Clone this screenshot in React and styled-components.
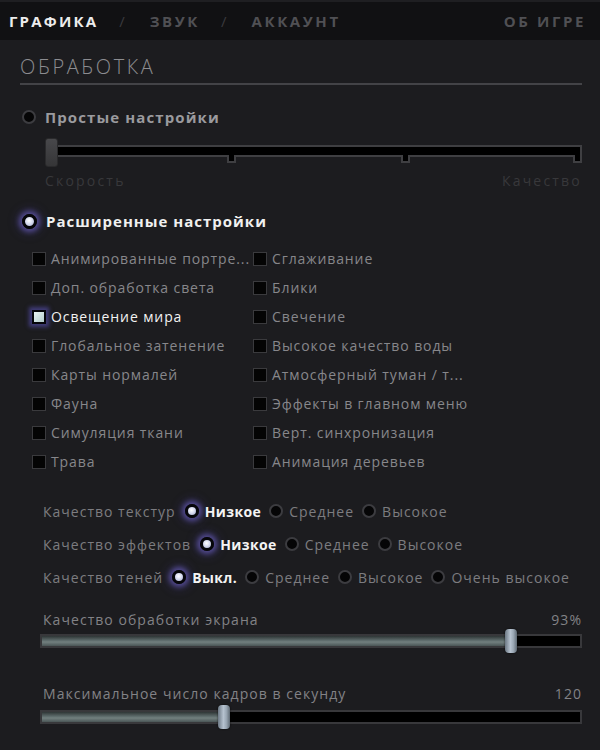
import React from "react";
import styled, { createGlobalStyle } from "styled-components";

const GlobalStyle = createGlobalStyle`
  html, body {
    margin: 0;
    padding: 0;
    background: #1c1c1f;
  }
  body {
    font-family: "Open Sans", "Noto Sans", sans-serif;
  }
`;

const Page = styled.div`
  width: 600px;
  height: 750px;
  background: #1c1c1f;
  overflow: hidden;
  display: flex;
  flex-direction: column;
`;

const TopBar = styled.div`
  height: 40px;
  background: #111113;
  border-top: 2px solid #1f1f22;
  box-sizing: border-box;
  display: flex;
  align-items: center;
  padding: 0 14px 0 9px;
`;

const Tab = styled.span`
  font-size: 15px;
  font-weight: 700;
  letter-spacing: ${(p) => (p.active ? 2.2 : 2.6)}px;
  color: ${(p) => (p.active ? "#ececec" : "#505054")};
`;

const Slash = styled.span`
  font-size: 15px;
  color: #3a3a3e;
  margin: 0 25px 0 21px;
`;

const Spacer = styled.div`
  flex: 1;
`;

const Content = styled.div`
  padding: 14px 18px 0 20px;
  display: flex;
  flex-direction: column;
`;

const SectionTitle = styled.div`
  font-size: 20px;
  font-weight: 300;
  letter-spacing: 2.6px;
  color: #8c8c90;
  line-height: 26px;
  padding-bottom: 3px;
  border-bottom: 2px solid #434347;
`;

const ModeRow = styled.div`
  display: flex;
  align-items: center;
  gap: 9px;
  margin-top: ${(p) => p.mt}px;
  margin-left: 2px;
`;

const ModeLabel = styled.span`
  font-size: 15px;
  font-weight: 700;
  letter-spacing: ${(p) => (p.active ? 1.0 : 1.1)}px;
  color: ${(p) => (p.active ? "#f0f0f0" : "#9a9a9e")};
`;

const Radio = styled.span`
  flex: none;
  width: ${(p) => p.size || 14}px;
  height: ${(p) => p.size || 14}px;
  border-radius: 50%;
  box-sizing: border-box;
  ${(p) =>
    p.checked
      ? `
    border: 3px solid #06060a;
    background: radial-gradient(circle at 45% 40%, #ffffff 0%, #d8dcf0 45%, #9ea6c8 100%);
    box-shadow: 0 0 5px 3px rgba(96, 86, 170, 0.75), 0 0 10px 5px rgba(70, 60, 140, 0.35);
  `
      : `
    border: 2px solid #3c3c40;
    background: #050506;
  `}
`;

const StepSlider = styled.div`
  margin: 11px 0 0 25px;
  position: relative;
  height: 30px;
`;

const StepTrack = styled.div`
  position: absolute;
  left: 12px;
  right: 0;
  top: 7px;
  height: 12px;
  background: #000;
  border: 2px solid #3f3f42;
  border-left: none;
  box-sizing: border-box;
`;

const Tick = styled.span`
  position: absolute;
  top: 8px;
  width: 9px;
  height: 8px;
  margin-left: -5px;
  background: #000;
  border: 2px solid #3f3f42;
  border-top: none;
  box-sizing: border-box;
`;

const StepThumb = styled.span`
  position: absolute;
  left: 0;
  top: 0;
  width: 13px;
  height: 29px;
  border-radius: 3px;
  background: linear-gradient(to bottom, #48484b, #353537);
  border: 1px solid #2a2a2c;
  box-sizing: border-box;
`;

const StepLabels = styled.div`
  display: flex;
  justify-content: space-between;
  margin: 5px 0 0 25px;
  font-size: 14px;
  letter-spacing: 2.2px;
  color: #38383b;
  line-height: 16px;
`;

const CheckGrid = styled.div`
  display: grid;
  grid-template-columns: 221px 1fr;
  grid-auto-rows: 29px;
  margin: 13px 0 0 12px;
`;

const CheckItem = styled.div`
  display: flex;
  align-items: center;
  gap: 5px;
  min-width: 0;
`;

const Box = styled.span`
  flex: none;
  width: 14px;
  height: 14px;
  box-sizing: border-box;
  border: 1px solid #3a3a3d;
  background: #040404;
  ${(p) =>
    p.checked &&
    `
    border: 2px solid #05050a;
    background: linear-gradient(135deg, #e8f4f4, #b4cccc);
    box-shadow: 0 0 4px 3px rgba(80, 72, 160, 0.7);
  `}
`;

const CheckText = styled.span`
  font-size: 14px;
  letter-spacing: 0.9px;
  color: ${(p) => (p.checked ? "#f2f2f2" : "#87878b")};
  white-space: nowrap;
`;

const QualityBlock = styled.div`
  margin: 24px 0 0 23px;
  display: flex;
  flex-direction: column;
  gap: 11px;
`;

const QualityRow = styled.div`
  display: flex;
  align-items: center;
  height: 22px;
  font-size: 14px;
  letter-spacing: 1px;
  color: #7c7c80;
`;

const QualityName = styled.span`
  margin-right: 9px;
`;

const Option = styled.span`
  display: flex;
  align-items: center;
  gap: 6px;
  margin-right: 8px;
`;

const OptionText = styled.span`
  color: ${(p) => (p.active ? "#f4f4f4" : "#7c7c80")};
  font-weight: ${(p) => (p.active ? 700 : 400)};
  letter-spacing: ${(p) => (p.active ? 0.4 : 1)}px;
`;

const RangeBlock = styled.div`
  margin: ${(p) => p.mt}px 0 0 20px;
  display: flex;
  flex-direction: column;
  gap: ${(p) => p.gap}px;
`;

const RangeHead = styled.div`
  display: flex;
  justify-content: space-between;
  padding-left: 3px;
  font-size: 14px;
  letter-spacing: 1.05px;
  color: #828286;
  line-height: 18px;
`;

const RangeTrack = styled.div`
  position: relative;
  height: 14px;
  background: #000;
  border: 2px solid #38383b;
  box-sizing: border-box;
`;

const RangeFill = styled.div`
  height: 100%;
  background: linear-gradient(to bottom, #2e3535 0%, #5f6d6d 45%, #72807f 60%, #4a5656 100%);
`;

const RangeThumb = styled.span`
  position: absolute;
  top: -7px;
  width: 12px;
  height: 24px;
  margin-left: -6px;
  border-radius: 4px;
  background: linear-gradient(to right, #6c7884, #b6c2cf 45%, #9aa7b4 70%, #5f6a74);
  box-shadow: 0 0 2px rgba(0, 0, 0, 0.8);
`;

const checks = [
  ["Анимированные портре...", false],
  ["Сглаживание", false],
  ["Доп. обработка света", false],
  ["Блики", false],
  ["Освещение мира", true],
  ["Свечение", false],
  ["Глобальное затенение", false],
  ["Высокое качество воды", false],
  ["Карты нормалей", false],
  ["Атмосферный туман / т...", false],
  ["Фауна", false],
  ["Эффекты в главном меню", false],
  ["Симуляция ткани", false],
  ["Верт. синхронизация", false],
  ["Трава", false],
  ["Анимация деревьев", false],
];

const qualities = [
  { name: "Качество текстур", options: ["Низкое", "Среднее", "Высокое"], value: 0 },
  { name: "Качество эффектов", options: ["Низкое", "Среднее", "Высокое"], value: 0 },
  { name: "Качество теней", options: ["Выкл.", "Среднее", "Высокое", "Очень высокое"], value: 0 },
];

const Range = ({ label, display, percent, mt, gap }) => (
  <RangeBlock mt={mt} gap={gap}>
    <RangeHead>
      <span>{label}</span>
      <span>{display}</span>
    </RangeHead>
    <RangeTrack>
      <RangeFill style={{ width: `${percent}%` }} />
      <RangeThumb style={{ left: `${percent}%` }} />
    </RangeTrack>
  </RangeBlock>
);

const App = () => {
  const steps = [33.5, 66.8];
  return (
    <Page>
      <GlobalStyle />
      <TopBar>
        <Tab active>ГРАФИКА</Tab>
        <Slash>/</Slash>
        <Tab>ЗВУК</Tab>
        <Slash>/</Slash>
        <Tab>АККАУНТ</Tab>
        <Spacer />
        <Tab>ОБ ИГРЕ</Tab>
      </TopBar>
      <Content>
        <SectionTitle>ОБРАБОТКА</SectionTitle>

        <ModeRow mt={22}>
          <Radio />
          <ModeLabel>Простые настройки</ModeLabel>
        </ModeRow>
        <StepSlider>
          <StepTrack>
            {steps.map((s) => (
              <Tick key={s} style={{ left: `${s}%` }} />
            ))}
            <Tick style={{ left: "calc(100% - 2px)" }} />
          </StepTrack>
          <StepThumb />
        </StepSlider>
        <StepLabels>
          <span>Скорость</span>
          <span>Качество</span>
        </StepLabels>

        <ModeRow mt={22}>
          <Radio checked size={15} />
          <ModeLabel active>Расширенные настройки</ModeLabel>
        </ModeRow>

        <CheckGrid>
          {checks.map(([label, on]) => (
            <CheckItem key={label}>
              <Box checked={on} />
              <CheckText checked={on}>{label}</CheckText>
            </CheckItem>
          ))}
        </CheckGrid>

        <QualityBlock>
          {qualities.map((q) => (
            <QualityRow key={q.name}>
              <QualityName>{q.name}</QualityName>
              {q.options.map((o, i) => (
                <Option key={o}>
                  <Radio checked={i === q.value} />
                  <OptionText active={i === q.value}>{o}</OptionText>
                </Option>
              ))}
            </QualityRow>
          ))}
        </QualityBlock>

        <Range label="Качество обработки экрана" display="93%" percent={87.1} mt={23} gap={5} />
        <Range label="Максимальное число кадров в секунду" display="120" percent={33.8} mt={37} gap={7} />
      </Content>
    </Page>
  );
};

export default App;
